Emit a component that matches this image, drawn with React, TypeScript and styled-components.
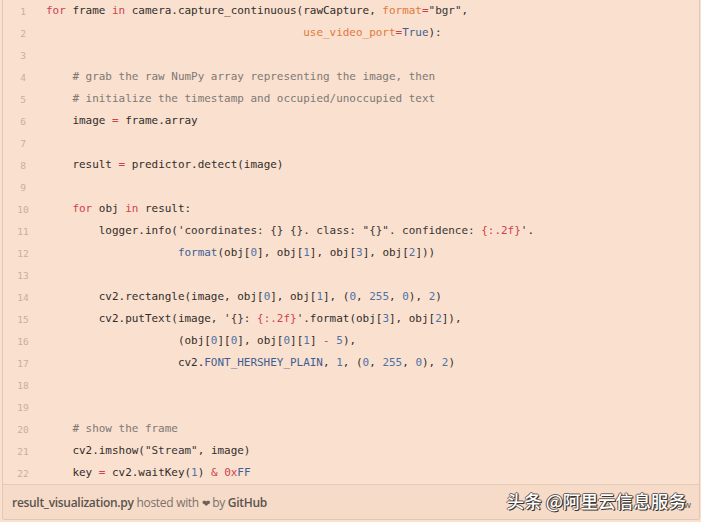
import React from "react";
import styled, { createGlobalStyle } from "styled-components";

const Global = createGlobalStyle`
  html, body { margin: 0; padding: 0; background: #f9e0cf; }
  body { width: 701px; height: 522px; overflow: hidden; }
`;

const Page = styled.div`
  position: relative;
  padding: 0 1px 0 2px;
  margin-top: -1px;
`;

const Gist = styled.div`
  border: 1px solid #e3c6b3;
  border-radius: 0 0 2px 2px;
  background: #f9e0cf;
`;

const CodeArea = styled.div`
  display: flex;
  flex-direction: column;
`;

const Row = styled.div`
  display: flex;
  height: 22px;
  align-items: center;
`;

const LineNum = styled.span`
  width: 40px;
  flex: none;
  text-align: center;
  font-family: "DejaVu Sans Mono", monospace;
  font-size: 9.5px;
  color: #c4b1a4;
`;

const Code = styled.pre`
  margin: 0;
  padding-left: 3px;
  font-family: "DejaVu Sans Mono", monospace;
  font-size: 10.96px;
  line-height: 22px;
  color: #332d2a;
  white-space: pre;
`;

const colors: Record<string, string> = {
  k: "#d1414c",
  o: "#d1414c",
  p: "#e2793a",
  c: "#3d5f93",
  n: "#4e73a8",
  cm: "#7f7873",
  s: "#3a3535",
  t: "#332d2a",
};

const Tok = styled.span<{ $t: string }>`
  color: ${(p) => colors[p.$t] || "#332d2a"};
`;

const Footer = styled.div`
  display: flex;
  align-items: center;
  justify-content: space-between;
  height: 34px;
  padding: 0 8px 0 9px;
  border-top: 1px solid #e6cab8;
  background: #f6dbc8;
  font-family: "Open Sans", "Liberation Sans", sans-serif;
  font-size: 12px;
  color: #7a726c;
`;

const FootLeft = styled.span`
  letter-spacing: -0.3px;
`;

const Strong = styled.span`
  font-weight: 600;
  color: #5a5450;
`;

const Heart = styled.span`
  color: #6a625d;
  font-size: 10px;
`;

const ViewRaw = styled.span`
  font-weight: 600;
  color: #7a726c;
  font-size: 9px;
  margin-top: 5px;
`;

const Watermark = styled.div`
  position: absolute;
  right: 15px;
  bottom: 7px;
  font-family: "Noto Sans CJK SC", sans-serif;
  font-size: 17.6px;
  font-weight: 500;
  letter-spacing: 0;
  color: #ffffff;
  text-shadow: 1px 1px 0 #3a3330, -1px 0 0 #5a524d, 0 -1px 0 #6a625c, 1px 0 1px #3a3330;
`;

type T = [string, string];
const L = (s: string): T => ["t", s];
const K = (s: string): T => ["k", s];
const O = (s: string): T => ["o", s];
const P = (s: string): T => ["p", s];
const C = (s: string): T => ["c", s];
const N = (s: string): T => ["n", s];
const CM = (s: string): T => ["cm", s];

const sp = (n: number) => " ".repeat(n);

const lines: T[][] = [
  [K("for"), L(" frame "), K("in"), L(" camera.capture_continuous(rawCapture, "), P("format"), O("="), ["s", '"bgr"'], L(",")],
  [L(sp(39)), P("use_video_port"), O("="), C("True"), L("):")],
  [],
  [L(sp(4)), CM("# grab the raw NumPy array representing the image, then")],
  [L(sp(4)), CM("# initialize the timestamp and occupied/unoccupied text")],
  [L(sp(4) + "image "), O("="), L(" frame.array")],
  [],
  [L(sp(4) + "result "), O("="), L(" predictor.detect(image)")],
  [],
  [L(sp(4)), K("for"), L(" obj "), K("in"), L(" result:")],
  [L(sp(8) + "logger.info("), ["s", "'coordinates: {} {}. class: \"{}\". confidence: "], O("{:.2f}"), ["s", "'"], L(".")],
  [L(sp(20)), C("format"), L("(obj["), N("0"), L("], obj["), N("1"), L("], obj["), N("3"), L("], obj["), N("2"), L("]))")],
  [],
  [L(sp(8) + "cv2.rectangle(image, obj["), N("0"), L("], obj["), N("1"), L("], ("), N("0"), L(", "), N("255"), L(", "), N("0"), L("), "), N("2"), L(")")],
  [L(sp(8) + "cv2.putText(image, "), ["s", "'{}: "], O("{:.2f}"), ["s", "'"], L(".format(obj["), N("3"), L("], obj["), N("2"), L("]),")],
  [L(sp(20) + "(obj["), N("0"), L("]["), N("0"), L("], obj["), N("0"), L("]["), N("1"), L("] "), O("-"), L(" "), N("5"), L("),")],
  [L(sp(20) + "cv2."), C("FONT_HERSHEY_PLAIN"), L(", "), N("1"), L(", ("), N("0"), L(", "), N("255"), L(", "), N("0"), L("), "), N("2"), L(")")],
  [],
  [],
  [L(sp(4)), CM("# show the frame")],
  [L(sp(4) + "cv2.imshow("), ["s", '"Stream"'], L(", image)")],
  [L(sp(4) + "key "), O("="), L(" cv2.waitKey("), N("1"), L(") "), O("&"), L(" "), O("0x"), C("FF")],
];

export default function App() {
  return (
    <>
      <Global />
      <Page>
        <Gist>
          <CodeArea>
            {lines.map((toks, i) => (
              <Row key={i}>
                <LineNum>{i + 1}</LineNum>
                <Code>
                  {toks.length === 0
                    ? " "
                    : toks.map(([t, s], j) => (
                        <Tok key={j} $t={t}>
                          {s}
                        </Tok>
                      ))}
                </Code>
              </Row>
            ))}
          </CodeArea>
          <Footer>
            <FootLeft>
              <Strong>result_visualization.py</Strong> hosted with <Heart>❤</Heart> by{" "}
              <Strong>GitHub</Strong>
            </FootLeft>
            <ViewRaw>w</ViewRaw>
          </Footer>
        </Gist>
        <Watermark>头条 @阿里云信息服务</Watermark>
      </Page>
    </>
  );
}
